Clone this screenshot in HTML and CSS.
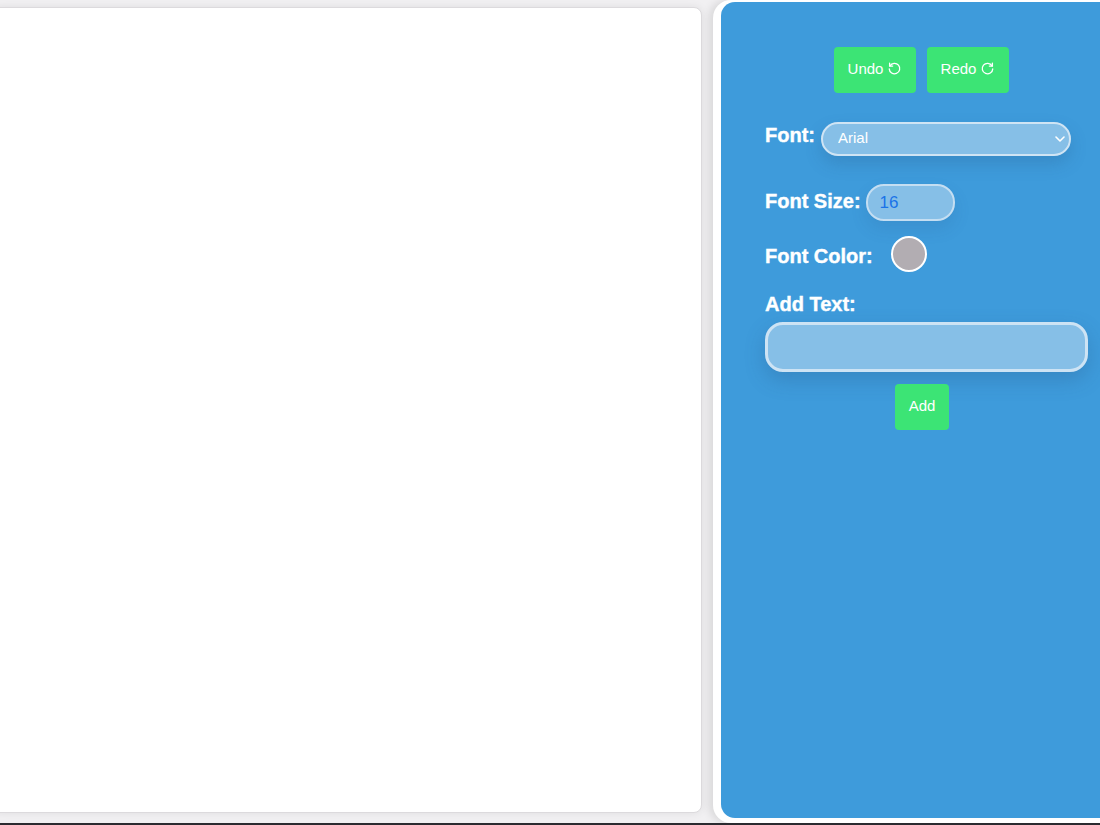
FILE: index.html
```html
<!DOCTYPE html>
<html lang="en">
<head>
  <meta charset="UTF-8">
  <meta name="viewport" content="width=device-width, initial-scale=1.0">
  <title>Editor</title>
  <link rel="stylesheet" href="styles.css">
</head>
<body>
  <div class="page">
    <div class="canvas"></div>
    <div class="panelWrap">
      <div class="panel">
        <div class="history">
          <button class="btn btnLarge">Undo
            <svg viewBox="0 0 16 16" width="15" height="15" fill="none" stroke="#fff" stroke-width="1.4" stroke-linecap="round"><path d="M3.2 5.2A5.6 5.6 0 1 1 2.4 8.4"/><path d="M2.8 2.2v3.2H6"/></svg>
          </button>
          <button class="btn btnLarge">Redo
            <svg viewBox="0 0 16 16" width="15" height="15" fill="none" stroke="#fff" stroke-width="1.4" stroke-linecap="round"><path d="M12.8 5.2A5.6 5.6 0 1 0 13.6 8.4"/><path d="M13.2 2.2v3.2H10"/></svg>
          </button>
        </div>
        <div class="row rowFont">
          <label class="label">Font:</label>
          <div class="selectWrap">
            <select class="fontSelect">
              <option>Arial</option>
            </select>
            <svg class="chevron" viewBox="0 0 10 6" width="10" height="6" fill="none" stroke="#fff" stroke-width="1.6" stroke-linecap="round" stroke-linejoin="round"><path d="M1 1l4 4 4-4"/></svg>
          </div>
        </div>
        <div class="row rowSize">
          <label class="label">Font Size:</label>
          <input class="sizeInput" type="text" value="16">
        </div>
        <div class="row rowColor">
          <label class="label">Font Color:</label>
          <span class="colorDot"></span>
        </div>
        <label class="label addLabel">Add Text:</label>
        <input class="textInput" type="text">
        <div class="addRow">
          <button class="btn btnSmall">Add</button>
        </div>
      </div>
    </div>
  </div>
  <div class="bottomLine"></div>
</body>
</html>
```

FILE: styles.css
```css
* {
  box-sizing: border-box;
}
html, body {
  margin: 0;
  height: 825px;
  overflow: hidden;
}
body {
  background: #f1f0f2;
  font-family: "Liberation Sans", Arial, sans-serif;
}
.page {
  display: flex;
  height: 823px;
  overflow: hidden;
}
.canvas {
  flex: none;
  width: 710px;
  height: 806px;
  margin: 7px 0 0 -8px;
  background: #fff;
  border: 1px solid #dcdadd;
  border-radius: 8px;
  box-shadow: 0 0 8px rgba(0, 0, 0, 0.08);
}
.panelWrap {
  flex: none;
  width: 420px;
  margin-left: 11px;
  padding: 2px 0 5px 8px;
  background: #fff;
  border-radius: 18px 0 0 18px;
  box-shadow: -4px 0 8px rgba(0, 0, 0, 0.1);
}
.panel {
  height: 100%;
  padding: 45px 0 0 44px;
  background: #3e9bdb;
  border-radius: 14px;
}
.history {
  display: flex;
  gap: 11px;
  margin-left: 69px;
}
.btn {
  display: flex;
  align-items: center;
  justify-content: center;
  gap: 4px;
  padding: 0 0 3px;
  border: 0;
  border-radius: 4px;
  background: #3ce475;
  color: #fff;
  font-family: "Liberation Sans", Arial, sans-serif;
  font-size: 15px;
}
.btnLarge {
  width: 82px;
  height: 46px;
}
.btnSmall {
  width: 54px;
  height: 46px;
}
.row {
  display: flex;
}
.rowFont {
  align-items: flex-start;
  gap: 6px;
  margin-top: 29px;
}
.rowSize {
  align-items: center;
  gap: 5px;
  margin-top: 28px;
}
.rowSize .label {
  margin-bottom: 2px;
}
.rowColor {
  align-items: flex-start;
  gap: 18px;
  margin-top: 15px;
}
.rowColor .label {
  margin-top: 7px;
}
.label {
  color: #fff;
  font-size: 20px;
  font-weight: bold;
  line-height: 27px;
  -webkit-text-stroke: 0.4px #fff;
}
.selectWrap {
  position: relative;
  display: flex;
}
.chevron {
  position: absolute;
  top: 14px;
  right: 6px;
}
.fontSelect {
  appearance: none;
  width: 250px;
  height: 34px;
  padding: 0 0 3px 15px;
  border: 2px solid #cfe4f4;
  border-radius: 17px;
  background: #86bfe7;
  box-shadow: 0 8px 16px rgba(40, 90, 140, 0.25);
  color: #fff;
  font-family: "Liberation Sans", Arial, sans-serif;
  font-size: 15px;
}
.sizeInput {
  width: 89px;
  height: 37px;
  padding: 0 12px;
  border: 2px solid #c4def2;
  border-radius: 18px;
  background: #86bfe7;
  box-shadow: 0 8px 16px rgba(40, 90, 140, 0.15);
  color: #1a73e8;
  font-family: "Liberation Sans", Arial, sans-serif;
  font-size: 17px;
}
.colorDot {
  width: 36px;
  height: 36px;
  border: 2px solid #fff;
  border-radius: 50%;
  background: #b2adb2;
}
.addLabel {
  display: block;
  margin-top: 19px;
}
.textInput {
  display: block;
  width: 323px;
  height: 50px;
  margin-top: 4px;
  border: 3px solid #cde3f4;
  border-radius: 18px;
  background: #86bfe7;
  box-shadow: 0 8px 20px rgba(40, 90, 140, 0.3);
}
.addRow {
  display: flex;
  margin: 12px 0 0 130px;
}
.bottomLine {
  height: 2px;
  background: #2b2b30;
}
```
